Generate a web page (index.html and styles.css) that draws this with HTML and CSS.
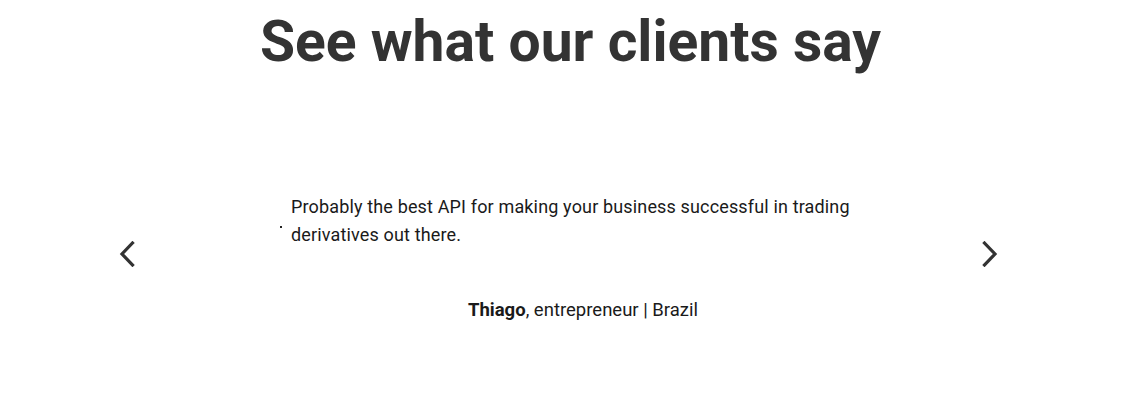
FILE: index.html
```html
<!DOCTYPE html>
<html lang="en">
<head>
<meta charset="utf-8">
<title>Testimonials</title>
<link rel="stylesheet" href="styles.css">
</head>
<body>
<section class="testimonials">
  <h1 class="title">See what our clients say</h1>
  <div class="slider">
    <button class="arrow" aria-label="Previous">
      <svg width="16" height="26" viewBox="0 0 16 26"><path d="M13.5 2 L3 13 L13.5 24" fill="none" stroke="#333" stroke-width="3.2" stroke-linecap="square"/></svg>
    </button>
    <div class="slide">
      <div class="quote">
        <span class="quote-mark"></span>
        <p class="quote-text">Probably the best API for making your business successful in trading derivatives out there.</p>
      </div>
      <p class="author"><strong>Thiago</strong>, entrepreneur | Brazil</p>
    </div>
    <button class="arrow" aria-label="Next">
      <svg width="16" height="26" viewBox="0 0 16 26"><path d="M2.5 2 L13 13 L2.5 24" fill="none" stroke="#333" stroke-width="3.2" stroke-linecap="square"/></svg>
    </button>
  </div>
</section>
</body>
</html>
```

FILE: styles.css
```css
* { box-sizing: border-box; }
body {
  margin: 0;
  background: #fff;
  font-family: Roboto, "Noto Sans", sans-serif;
  color: #1a1a1a;
}
.testimonials {
  display: flex;
  flex-direction: column;
  align-items: center;
}
.title {
  margin: 8px 0 0;
  font-size: 57px;
  line-height: 68px;
  font-weight: 700;
  color: #333;
  letter-spacing: 0;
}
.slider {
  margin-top: 117px;
  width: 100%;
  display: flex;
  align-items: center;
  padding: 0 131px 0 107px;
}
.arrow {
  background: none;
  border: 0;
  padding: 0;
  width: 40px;
  height: 40px;
  margin-bottom: 10px;
  display: flex;
  align-items: center;
  justify-content: center;
  cursor: pointer;
  flex: none;
}
.slide {
  flex: 1;
  display: flex;
  flex-direction: column;
  align-items: center;
  padding: 0 81px 0 130px;
}
.quote {
  display: flex;
  align-items: flex-start;
  gap: 9px;
  width: 100%;
}
.quote-mark {
  width: 2px;
  height: 2px;
  margin-top: 33px;
  margin-left: 3px;
  background: #222;
  flex: none;
}
.quote-text {
  margin: 0;
  font-size: 18px;
  line-height: 28px;
  letter-spacing: 0.15px;
  flex: 1;
}
.author {
  margin: 47px 0 0;
  font-size: 18.5px;
  line-height: 28px;
}
.author strong { font-weight: 700; }
```
